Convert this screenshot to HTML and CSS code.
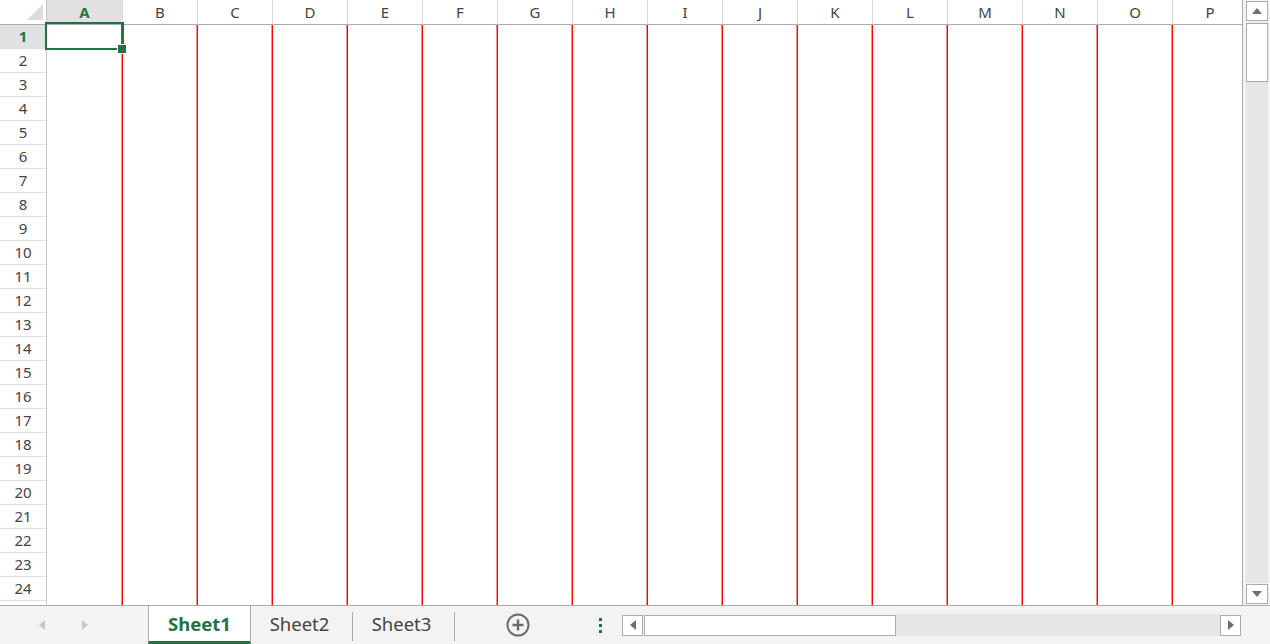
FILE: index.html
```html
<!DOCTYPE html>
<html>
<head>
<meta charset="utf-8">
<link rel="stylesheet" href="styles.css">
</head>
<body>
<div class="app">
  <div class="main">
    <div class="grid">
      <div class="rowhdrs">
        <div class="corner">
          <svg class="tri" width="16" height="16" viewBox="0 0 16 16"><polygon points="16,0 16,16 0,16" fill="#dcdcdc"/></svg>
        </div>
        <div class="rh rh-sel">1</div>
        <div class="rh">2</div>
        <div class="rh">3</div>
        <div class="rh">4</div>
        <div class="rh">5</div>
        <div class="rh">6</div>
        <div class="rh">7</div>
        <div class="rh">8</div>
        <div class="rh">9</div>
        <div class="rh">10</div>
        <div class="rh">11</div>
        <div class="rh">12</div>
        <div class="rh">13</div>
        <div class="rh">14</div>
        <div class="rh">15</div>
        <div class="rh">16</div>
        <div class="rh">17</div>
        <div class="rh">18</div>
        <div class="rh">19</div>
        <div class="rh">20</div>
        <div class="rh">21</div>
        <div class="rh">22</div>
        <div class="rh">23</div>
        <div class="rh">24</div>
        <div class="rh"></div>
      </div>
      <div class="col col-a"><div class="ch ch-sel">A</div><div class="cb"></div></div>
      <div class="col"><div class="ch">B</div><div class="cb"></div></div>
      <div class="col"><div class="ch">C</div><div class="cb"></div></div>
      <div class="col"><div class="ch">D</div><div class="cb"></div></div>
      <div class="col"><div class="ch">E</div><div class="cb"></div></div>
      <div class="col"><div class="ch">F</div><div class="cb"></div></div>
      <div class="col"><div class="ch">G</div><div class="cb"></div></div>
      <div class="col"><div class="ch">H</div><div class="cb"></div></div>
      <div class="col"><div class="ch">I</div><div class="cb"></div></div>
      <div class="col"><div class="ch">J</div><div class="cb"></div></div>
      <div class="col"><div class="ch">K</div><div class="cb"></div></div>
      <div class="col"><div class="ch">L</div><div class="cb"></div></div>
      <div class="col"><div class="ch">M</div><div class="cb"></div></div>
      <div class="col"><div class="ch">N</div><div class="cb"></div></div>
      <div class="col"><div class="ch">O</div><div class="cb"></div></div>
      <div class="col col-last"><div class="ch">P</div><div class="cb"></div></div>
      <div class="selbox"><div class="handle"></div></div>
    </div>
    <div class="vscroll">
      <div class="sbtn">
        <svg width="10" height="6" viewBox="0 0 10 6"><polygon points="0,6 10,6 5,0" fill="#6f6f6f"/></svg>
      </div>
      <div class="vtrack"><div class="vthumb"></div></div>
      <div class="sbtn">
        <svg width="10" height="6" viewBox="0 0 10 6"><polygon points="0,0 10,0 5,6" fill="#6f6f6f"/></svg>
      </div>
    </div>
  </div>
  <div class="tabbar">
    <div class="nav">
      <svg width="6" height="10" viewBox="0 0 6 10"><polygon points="6,0 6,10 0,5" fill="#c6c6c6"/></svg>
      <svg width="6" height="10" viewBox="0 0 6 10"><polygon points="0,0 0,10 6,5" fill="#c6c6c6"/></svg>
    </div>
    <div class="tab tab-active">Sheet1</div>
    <div class="tab">Sheet2</div>
    <div class="tab">Sheet3</div>
    <div class="addarea">
      <svg width="24" height="24" viewBox="0 0 24 24">
        <circle cx="12" cy="12" r="10.5" fill="none" stroke="#6b6b6b" stroke-width="2"/>
        <path d="M12 6.5v11M6.5 12h11" stroke="#6b6b6b" stroke-width="2.4"/>
      </svg>
    </div>
    <div class="dots"><span></span><span></span><span></span></div>
    <div class="hscroll">
      <div class="hbtn">
        <svg width="6" height="10" viewBox="0 0 6 10"><polygon points="6,0 6,10 0,5" fill="#6f6f6f"/></svg>
      </div>
      <div class="hthumb"></div>
      <div class="htrack"></div>
      <div class="hbtn">
        <svg width="6" height="10" viewBox="0 0 6 10"><polygon points="0,0 0,10 6,5" fill="#6f6f6f"/></svg>
      </div>
    </div>
  </div>
</div>
</body>
</html>
```
FILE: styles.css
```css
* { box-sizing: border-box; }
html, body { margin: 0; padding: 0; }
body {
  width: 1270px;
  height: 644px;
  overflow: hidden;
  background: #ffffff;
  font-family: "Noto Sans", "Open Sans", sans-serif;
  color: #444444;
}
.app {
  display: flex;
  flex-direction: column;
  width: 1270px;
  height: 644px;
}
.main {
  display: flex;
  height: 605px;
  flex: 0 0 605px;
}
.grid {
  position: relative;
  display: flex;
  width: 1242px;
  flex: 0 0 1242px;
  overflow: hidden;
  background: #ffffff;
}
.rowhdrs {
  flex: 0 0 47px;
  width: 47px;
  border-right: 1px solid #c6c6c6;
  display: flex;
  flex-direction: column;
}
.corner {
  height: 25px;
  flex: 0 0 25px;
  border-bottom: 1px solid #ababab;
  position: relative;
  display: flex;
  justify-content: flex-end;
  align-items: flex-end;
  padding: 0 3px 4px 0;
}
.rh {
  height: 24px;
  flex: 0 0 24px;
  border-bottom: 1px solid #e1e1e1;
  font-size: 15px;
  line-height: 23px;
  text-align: center;
  color: #444444;
}
.rh-sel {
  background: #e1e1e1;
  color: #217346;
  font-weight: 700;
}
.col {
  flex: 0 0 75px;
  width: 75px;
  display: flex;
  flex-direction: column;
}
.col-a { flex-basis: 76px; width: 76px; }
.col-last { flex: 1 0 75px; }
.ch {
  height: 25px;
  flex: 0 0 25px;
  border-bottom: 1px solid #ababab;
  border-right: 1px solid #dadada;
  font-size: 15px;
  line-height: 25px;
  text-align: center;
  color: #444444;
}
.ch-sel {
  background: #e1e1e1;
  color: #217346;
  font-weight: 700;
}
.cb {
  flex: 1;
  border-right: 1px solid #ff0000;
  box-shadow: inset -1px 0 0 rgba(255, 0, 0, 0.45);
}
.selbox {
  position: absolute;
  left: 45px;
  top: 22px;
  width: 79px;
  height: 28px;
  border: 2px solid #217346;
  border-right-width: 3px;
}
.handle {
  position: absolute;
  right: -6px;
  bottom: -6px;
  width: 10px;
  height: 10px;
  background: #217346;
  border: 1px solid #ffffff;
}
.vscroll {
  flex: 0 0 28px;
  width: 28px;
  border-left: 1px solid #ababab;
  background: #f3f3f3;
  display: flex;
  flex-direction: column;
  padding: 1px 2px 1px 3px;
  gap: 1px;
}
.sbtn {
  flex: 0 0 20px;
  height: 20px;
  background: #ffffff;
  border: 1px solid #ababab;
  display: flex;
  align-items: center;
  justify-content: center;
}
.vtrack {
  flex: 1;
  background: #e6e6e6;
  padding-top: 1px;
}
.vthumb {
  height: 59px;
  background: #ffffff;
  border: 1px solid #ababab;
}
.tabbar {
  flex: 0 0 39px;
  height: 39px;
  border-top: 1px solid #ababab;
  background: #f3f3f3;
  display: flex;
  align-items: stretch;
}
.nav {
  flex: 0 0 148px;
  display: flex;
  align-items: center;
  padding-left: 39px;
  gap: 37px;
}
.tab {
  flex: 0 0 102px;
  font-size: 18.5px;
  color: #444444;
  text-align: center;
  line-height: 36px;
  padding-right: 5px;
  background: linear-gradient(#ababab, #ababab) right 6px / 1px 29px no-repeat;
}
.tab-active {
  flex-basis: 103px;
  padding-right: 0;
  background: #ffffff;
  color: #217346;
  font-weight: 700;
  border-left: 1px solid #ababab;
  border-right: 1px solid #ababab;
  border-top: 1px solid #ababab;
  border-bottom: 3px solid #217346;
  margin-top: -1px;
}
.addarea {
  flex: 0 0 125px;
  display: flex;
  align-items: center;
  justify-content: center;
}
.dots {
  flex: 0 0 42px;
  display: flex;
  flex-direction: column;
  align-items: flex-start;
  justify-content: center;
  padding-left: 19px;
  gap: 3px;
}
.dots span {
  width: 3px;
  height: 3px;
  background: #217346;
}
.hscroll {
  flex: 0 0 619px;
  display: flex;
  align-items: center;
}
.hscroll > * { height: 21px; }
.hbtn {
  flex: 0 0 21px;
  background: #ffffff;
  border: 1px solid #ababab;
  display: flex;
  align-items: center;
  justify-content: center;
}
.hthumb {
  flex: 0 0 252px;
  margin-left: 1px;
  background: #ffffff;
  border: 1px solid #ababab;
}
.htrack {
  flex: 1;
  background: #e6e6e6;
  height: 22px;
}
```
